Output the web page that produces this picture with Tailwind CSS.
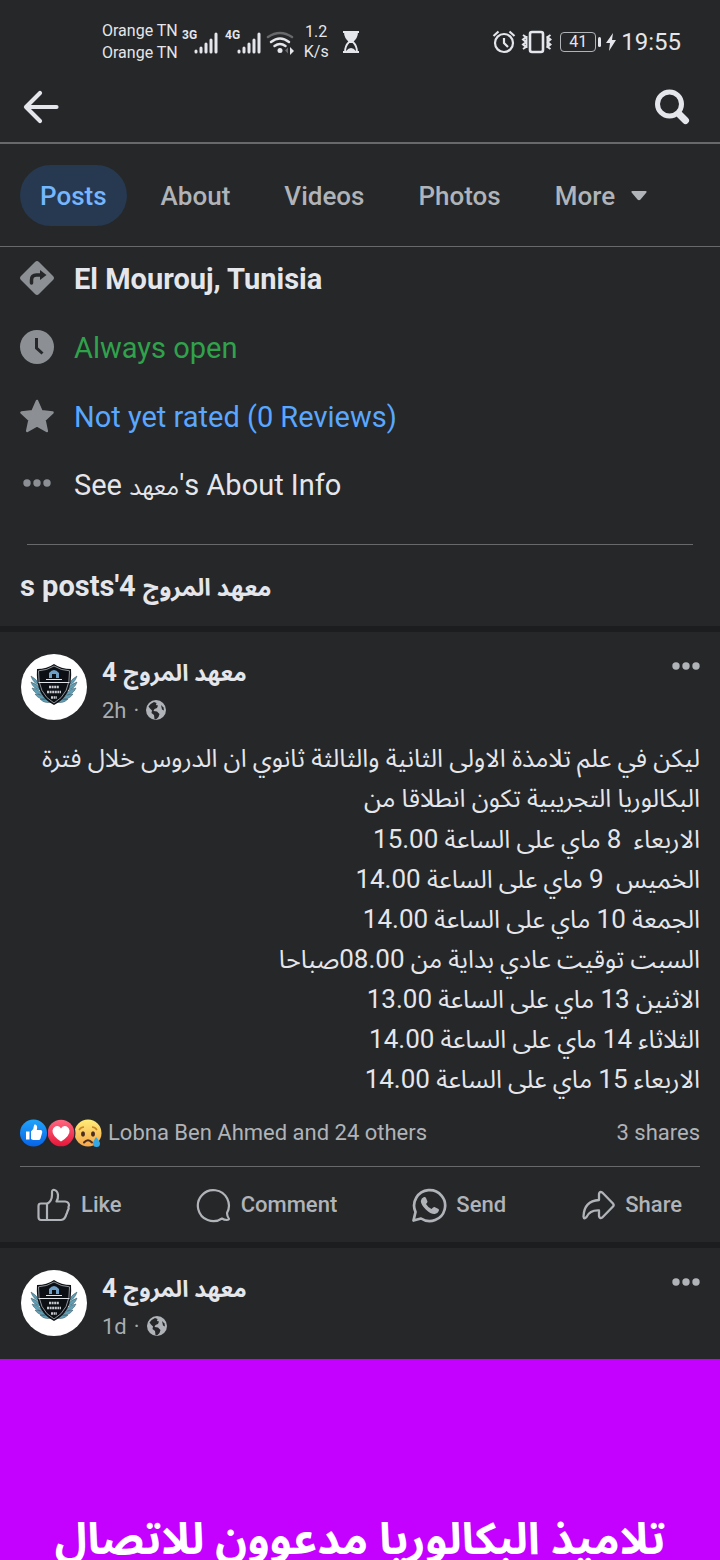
<!DOCTYPE html>
<html lang="en">
<head>
<meta charset="utf-8">
<meta name="viewport" content="width=device-width, initial-scale=1">
<title>معهد المروج 4</title>
<script src="https://cdn.jsdelivr.net/npm/@tailwindcss/browser@4"></script>
</head>
<body class="bg-[#252729] text-[#e4e6eb] font-[Roboto,'Noto_Sans_Arabic','DejaVu_Sans',sans-serif]">
<svg class="hidden" aria-hidden="true">
  <defs>
    <symbol id="crest" viewBox="0 0 66 66">
      <circle cx="33" cy="33" r="33" fill="#fff"/>
      <g fill="#5f9fb5" stroke="#34505f" stroke-width=".5">
        <path d="M10 22q6 3 8 9q-6-2-8-9zM10 28q7 2 10 8q-8-1-10-8zM11 34q7 1 11 7q-8 0-11-7zM14 40q7 0 11 5q-7 1-11-5zM19 45q6-1 11 3q-6 2-11-3z"/>
        <path d="M56 22q-6 3-8 9q6-2 8-9zM56 28q-7 2-10 8q8-1 10-8zM55 34q-7 1-11 7q8 0 11-7zM52 40q-7 0-11 5q7 1 11-5zM47 45q-6-1-11 3q6 2 11-3z"/>
      </g>
      <path d="M33 10q7 5 17 5q2 27-17 36q-19-9-17-36q10 0 17-5z" fill="#0c0f14"/>
      <path d="M33 12q7 4.500 15.500 4.800q1 23-15.500 32.200q-16.500-9.200-15.500-32.200q8.500-.3 15.500-4.800z" fill="none" stroke="#c9ced3" stroke-width=".7"/>
      <path d="M28 24v-5q5-6 10 0v5h-3v-4h-4v4z" fill="#6d9fc7"/>
      <path d="M25 25.500h16M17.500 28.500h31" stroke="#dfe3e8" stroke-width="1"/>
      <path d="M28 33h10M26 38h14M30 43.500h6" stroke="#c7c9cc" stroke-width="2.400" stroke-dasharray="2 .6"/>
    </symbol>
    <symbol id="globe" viewBox="0 0 20 20">
      <circle cx="10" cy="10" r="10" fill="#b0b3b8"/>
      <path d="M2.500 6.500Q4 3.500 8 2l2.500 1-.5 2 2 .5-1 2.500-2.500 1-1 2 3.500.5 2.500 2.500-1 3-2.500 2.500-1.500-.5-.5-4-2.500-2 .5-2.500L4 8.500z" fill="#252729"/>
      <path d="M15 5l2.500 2.500.5 3-2-1z" fill="#252729"/>
    </symbol>
    <symbol id="dots" viewBox="0 0 28 8">
      <g fill="currentColor"><circle cx="4" cy="4" r="3.700"/><circle cx="14" cy="4" r="3.700"/><circle cx="24" cy="4" r="3.700"/></g>
    </symbol>
  </defs>
</svg>

<div class="flex h-screen flex-col overflow-hidden">
  <div class="flex h-[74px] shrink-0 items-center pt-2.5 pr-[39px] pl-[102px]">
    <div class="text-base leading-[22px] whitespace-nowrap"><div>Orange TN</div><div>Orange TN</div></div>
    <svg class="ml-1 h-7 w-[112px] shrink-0" viewBox="0 0 112 28" fill="none" stroke="#e4e6eb" stroke-linecap="round" role="img" aria-label="Mobile signal and Wi-Fi">
      <g fill="#e4e6eb" stroke="none" font-family="Liberation Sans Narrow, Roboto" font-weight="700" font-size="12"><text x="0" y="11">3G</text><text x="43" y="11">4G</text></g>
      <path stroke-width="3" d="M14 24v-1M19 24v-4M24 24v-8M29 24v-12M34 24V6M57 24v-1M62 24v-4M67 24v-8M72 24v-12M77 24V6"/>
      <path stroke="#67696b" stroke-width="2.500" d="M86 9q12-8 24 0"/>
      <path stroke-width="2.500" d="M89 14q9-7 18 0M92.500 18q5.500-4 11 0"/>
      <circle cx="98" cy="22.500" r="2.500" fill="#e4e6eb" stroke="none"/>
      <path d="M108 19l4 4-4 4z" fill="#e4e6eb" stroke="none"/><path d="M106 19.500l-3 3 3 3z" fill="#67696b" stroke="none"/>
    </svg>
    <div class="ml-2.5 text-center text-base leading-5 whitespace-nowrap"><div>1.2</div><div>K/s</div></div>
    <svg class="ml-3 h-6 w-5 shrink-0" viewBox="0 0 20 24" role="img" aria-label="Hourglass"><path d="M2 2h16M2 22h16" stroke="#e4e6eb" stroke-width="2"/><path d="M3 2h14q0 6-5 10H8Q3 8 3 2z" fill="#e4e6eb"/><path d="M8 12q-4 4-4 10h12q0-6-4-10z" fill="none" stroke="#e4e6eb" stroke-width="1.800"/><path d="M5 21q5-6 10 0z" fill="#e4e6eb"/></svg>
    <div class="ml-auto flex items-center">
      <svg class="h-6 w-[60px]" viewBox="0 0 60 24" fill="none" stroke="#e4e6eb" stroke-width="2.200" role="img" aria-label="Alarm set, vibrate">
        <circle cx="12" cy="13" r="9"/><path d="M12 8v5l4 4M1.500 6l5-4.500M22.500 6l-5-4.500"/>
        <rect x="38" y="2" width="13" height="20" rx="2" stroke-width="2.600"/>
        <path stroke-width="2" d="M31 5l3 2-3 2.500 3 2.500-3 2.500 3 2.500-3 2M34.500 6v12M58.500 5l-3 2 3 2.500-3 2.500 3 2.500-3 2.500 3 2M55.500 6v12"/>
      </svg>
      <div class="ml-2 flex h-5 w-9 items-center justify-center rounded border border-[#b0b3b8] text-base leading-none">41</div>
      <div class="ml-0.5 h-2.5 w-[3px] rounded-sm bg-[#e4e6eb]"></div>
      <svg class="ml-1 h-5 w-3" viewBox="0 0 12 20" aria-hidden="true"><path d="M8 1L1 11h4l-1 8 7-11H7z" fill="#e4e6eb"/></svg>
      <div class="ml-1 text-2xl">19:55</div>
    </div>
  </div>

  <header class="flex h-[70px] shrink-0 items-center justify-between border-b-2 border-[#67696b] px-5 pb-0.5">
    <button aria-label="Back"><svg class="h-10 w-10" viewBox="0 0 40 40" fill="none" stroke="#e4e6eb" stroke-width="4.200" stroke-linecap="round" stroke-linejoin="round"><path d="M36.500 20H6M20 6L6 20l14 14"/></svg></button>
    <button class="mr-2.5" aria-label="Search"><svg class="h-10 w-10" viewBox="0 0 40 40" fill="none" stroke="#e4e6eb"><circle cx="19.500" cy="17" r="12" stroke-width="5"/><path d="M29.500 27.500l6 6" stroke-width="7" stroke-linecap="round"/></svg></button>
  </header>

  <nav class="flex h-[103px] shrink-0 items-center border-b border-[#67696b] pl-5 text-[26px] font-medium text-[#b0b3b8]">
    <button class="h-[61px] rounded-full bg-[#263951] px-5 pt-0.5 text-[#75b6ff]">Posts</button>
    <button class="ml-[34px] pt-0.5">About</button>
    <button class="ml-[54px] pt-0.5">Videos</button>
    <button class="ml-[54px] pt-0.5">Photos</button>
    <button class="ml-[54px] flex items-center gap-4 pt-0.5">More<svg class="h-3 w-4" viewBox="0 0 16 12" aria-hidden="true"><path d="M1.500 1h13q2 0 .5 2L9.500 9.500q-1.500 1.500-3 0L1 3Q-.5 1 1.500 1z" fill="currentColor"/></svg></button>
  </nav>

  <section class="shrink-0 px-5">
    <ul class="text-[29px] leading-[69px] whitespace-nowrap">
      <li class="-mt-0.5 flex h-[69px] items-center gap-5">
        <svg class="mb-1 h-[34px] w-[34px]" viewBox="0 0 34 34" aria-hidden="true"><path d="M15 1q2-2 4 0l14 14q2 2 0 4L19 33q-2 2-4 0L1 19q-2-2 0-4z" fill="#8c8f94"/><path d="M11.500 22v-3q0-5 5-5h5" fill="none" stroke="#252729" stroke-width="3.500" stroke-linecap="round"/><path d="M20 9l6.500 5-6.500 5z" fill="#252729"/></svg>
        <span class="font-bold">El Mourouj, Tunisia</span></li>
      <li class="flex h-[69px] items-center gap-5">
        <svg class="mb-1 h-[34px] w-[34px]" viewBox="0 0 34 34" aria-hidden="true"><circle cx="17" cy="17" r="17" fill="#8c8f94"/><path d="M16.500 8v10l6 5.500" fill="none" stroke="#252729" stroke-width="3"/></svg>
        <span class="text-[#31a24c]">Always open</span></li>
      <li class="flex h-[69px] items-center gap-5">
        <svg class="mb-1 h-[34px] w-[34px]" viewBox="0 0 34 34" aria-hidden="true"><path d="M17 2l4.500 10.200 11 1.300-8 7.500 2.300 11L17 26.500 7.200 32l2.300-11-8-7.500 11-1.300z" fill="#8c8f94" stroke="#8c8f94" stroke-width="2.500" stroke-linejoin="round"/></svg>
        <a href="#reviews" class="text-[#5aa7ff]">Not yet rated (0 Reviews)</a></li>
      <li class="flex h-[69px] items-center gap-5">
        <svg class="mx-[3px] mb-2 h-2 w-7 text-[#8c8f94]" aria-hidden="true"><use href="#dots"/></svg>
        <a href="#about">See <bdi class="text-[24px]">معهد</bdi>'s About Info</a></li>
    </ul>
    <hr class="mx-[7px] mt-[23px] border-[#67696b]">
    <h2 class="flex h-[81px] items-center pt-0.5 text-[29px] font-bold"><span>s posts'4 <bdi class="text-[24px]">معهد المروج</bdi></span></h2>
  </section>

  <article class="shrink-0 border-t-[6px] border-[#1c1d1f]">
    <header class="flex h-[107px] items-start px-5 pt-5">
      <svg class="mx-px mt-0.5 h-[66px] w-[66px]" role="img" aria-label="معهد المروج 4"><use href="#crest"/></svg>
      <div class="ml-3.5">
        <h3 class="h-10 text-[26px] leading-10 font-bold whitespace-nowrap" dir="rtl"><span class="text-[23px]">معهد المروج</span> 4</h3>
        <p class="flex h-9 items-center gap-[7px] text-[22px] text-[#a9acb0]">2h <span>·</span> <svg class="h-5 w-5" aria-hidden="true"><use href="#globe"/></svg></p>
      </div>
      <button class="mt-[10px] ml-auto text-[#b0b3b8]" aria-label="Post options"><svg class="h-2 w-7"><use href="#dots"/></svg></button>
    </header>
    <div class="px-5 text-[25px] leading-10 whitespace-pre" dir="rtl"><p class="h-10">ليكن في علم تلامذة الاولى الثانية والثالثة ثانوي ان الدروس خلال فترة</p><p class="h-10">البكالوريا التجريبية تكون انطلاقا من</p><p class="h-10">الاربعاء  <span class="text-[26px]">8</span> ماي على الساعة <span class="text-[26px]">15.00</span></p><p class="h-10">الخميس  <span class="text-[26px]">9</span> ماي على الساعة <span class="text-[26px]">14.00</span></p><p class="h-10">الجمعة <span class="text-[26px]">10</span> ماي على الساعة <span class="text-[26px]">14.00</span></p><p class="h-10">السبت توقيت عادي بداية من <span class="text-[26px]">08.00</span>صباحا</p><p class="h-10">الاثنين <span class="text-[26px]">13</span> ماي على الساعة <span class="text-[26px]">13.00</span></p><p class="h-10">الثلاثاء <span class="text-[26px]">14</span> ماي على الساعة <span class="text-[26px]">14.00</span></p><p class="h-10">الاربعاء <span class="text-[26px]">15</span> ماي على الساعة <span class="text-[26px]">14.00</span></p></div>
    <div class="mx-5 flex h-[68px] items-center border-b border-[#67696b] text-[22px] text-[#b0b3b8]">
      <svg class="h-7 w-[82px]" viewBox="0 0 82 28" role="img" aria-label="Like, love and sad reactions">
        <defs>
          <linearGradient id="blue" x2="0" y2="1"><stop stop-color="#20a4fa"/><stop offset="1" stop-color="#0763e8"/></linearGradient>
          <linearGradient id="red" x2="0" y2="1"><stop stop-color="#ff6680"/><stop offset="1" stop-color="#e61739"/></linearGradient>
          <linearGradient id="gold" x2="0" y2="1"><stop stop-color="#ffed78"/><stop offset="1" stop-color="#f5a64b"/></linearGradient>
        </defs>
        <circle cx="68" cy="14" r="13.500" fill="url(#gold)"/>
        <path d="M59 11q2-3 5-3M77 11q-2-3-5-3" fill="none" stroke="#c98525" stroke-width="1.500"/>
        <ellipse cx="63" cy="15" rx="2" ry="2.700" fill="#4b2e21"/><ellipse cx="73" cy="15" rx="2" ry="2.700" fill="#4b2e21"/>
        <path d="M64 23.500q4-4.500 8 0" fill="none" stroke="#4b2e21" stroke-width="2" stroke-linecap="round"/>
        <path d="M76 18q4 4.500 4 6.500a3.500 3.500 0 0 1-7 0q0-2 3-6.500z" fill="#32a9e6"/>
        <circle cx="41" cy="14" r="14.500" fill="#252729"/><circle cx="41" cy="14" r="13.300" fill="url(#red)"/>
        <path d="M41 22.500Q32 17 32.500 11.500 33.500 7 37.500 7q2.500.3 3.500 2.500Q42 7.300 44.500 7q4 0 5 4.500Q50 17 41 22.500z" fill="#fff"/>
        <circle cx="13.500" cy="14" r="14.500" fill="#252729"/><circle cx="13.500" cy="14" r="13.500" fill="url(#blue)"/>
        <path d="M6 12.500h3.500v8H6zM11 12.500q3-2.500 3-6 0-1.500 1.500-1 2.500 1 1.300 5.500H21q1.700.5 1.200 2.500l-1.700 6q-.5 1.500-2 1.500H13l-2-1z" fill="#fff"/>
      </svg>
      <span class="ml-1.5">Lobna Ben Ahmed and 24 others</span>
      <span class="ml-auto">3 shares</span>
    </div>
    <div class="flex h-[75px] items-center justify-between pr-[38px] pl-9 text-[22px] font-medium text-[#b0b3b8]">
      <button class="flex items-center gap-[9px]"><svg class="h-9 w-9" viewBox="0 0 36 36" fill="none" stroke="currentColor" stroke-width="2.200" stroke-linejoin="round" aria-hidden="true"><path d="M11 16.500H5q-2.500 0-2.500 2.500v11Q2.500 33 5 33h6zM11 17q5-3 5-9V5q0-2.500 2.500-2 3 .7 3.500 5 .3 4-1.500 6.500H29q4 .3 4 4-1 1.500-.3 3-.7 1.500-1.300 3-.4 2-1.200 3-1 5-5.200 5.500H11"/></svg>Like</button>
      <button class="flex items-center gap-[9px]"><svg class="h-9 w-9" viewBox="0 0 36 36" fill="none" stroke="currentColor" stroke-width="2.200" stroke-linejoin="round" aria-hidden="true"><path d="M26 31.500A15.500 15.500 0 1 1 31 26q0 3 2 6-.3 1-2 1-3-.2-5-1.500z"/></svg>Comment</button>
      <button class="flex items-center gap-[9px]"><svg class="h-9 w-9" viewBox="0 0 36 36" fill="none" stroke="currentColor" stroke-width="2.700" stroke-linejoin="round" aria-hidden="true"><path d="M4.500 25A15.500 15.500 0 1 1 10 31.500L2.500 33.500z"/><path d="M13 10q1.500-.3 2 1l1.500 3.500q0 1-1.500 2.500 2 3.500 5.500 5 2-2.300 3-2l4 2q.8.500.3 2-1 2.500-4 3-4 .3-9-4.500-5-5-5-8.500.4-3 3.200-4z" fill="currentColor" stroke="none"/></svg>Send</button>
      <button class="flex items-center gap-[9px]"><svg class="h-9 w-9" viewBox="0 0 36 36" fill="none" stroke="currentColor" stroke-width="2.300" stroke-linejoin="round" aria-hidden="true"><path d="M19 13V7q.5-3 3.300-1.500L33 16.500q1.300 1.500 0 3L22.300 30.500Q19.500 32 19 29v-5.500q-9-.5-12.500 6.500-2.500 3-3-.5Q4 14 19 13z"/></svg>Share</button>
    </div>
  </article>

  <article class="flex min-h-0 flex-1 flex-col border-t-[6px] border-[#1c1d1f]">
    <header class="flex h-[111px] shrink-0 items-start px-5 pt-5">
      <svg class="mx-px mt-0.5 h-[66px] w-[66px]" role="img" aria-label="معهد المروج 4"><use href="#crest"/></svg>
      <div class="ml-3.5">
        <h3 class="h-10 text-[26px] leading-10 font-bold whitespace-nowrap" dir="rtl"><span class="text-[23px]">معهد المروج</span> 4</h3>
        <p class="flex h-9 items-center gap-[7px] text-[22px] text-[#a9acb0]">1d <span>·</span> <svg class="h-5 w-5" aria-hidden="true"><use href="#globe"/></svg></p>
      </div>
      <button class="mt-[10px] ml-auto text-[#b0b3b8]" aria-label="Post options"><svg class="h-2 w-7"><use href="#dots"/></svg></button>
    </header>
    <div class="min-h-0 flex-1 overflow-hidden bg-[#c400ff] pt-[140px] text-center text-[44px] leading-[80px] font-bold whitespace-nowrap text-white" dir="rtl">تلاميذ البكالوريا مدعوون للاتصال</div>
  </article>
</div>
</body>
</html>
